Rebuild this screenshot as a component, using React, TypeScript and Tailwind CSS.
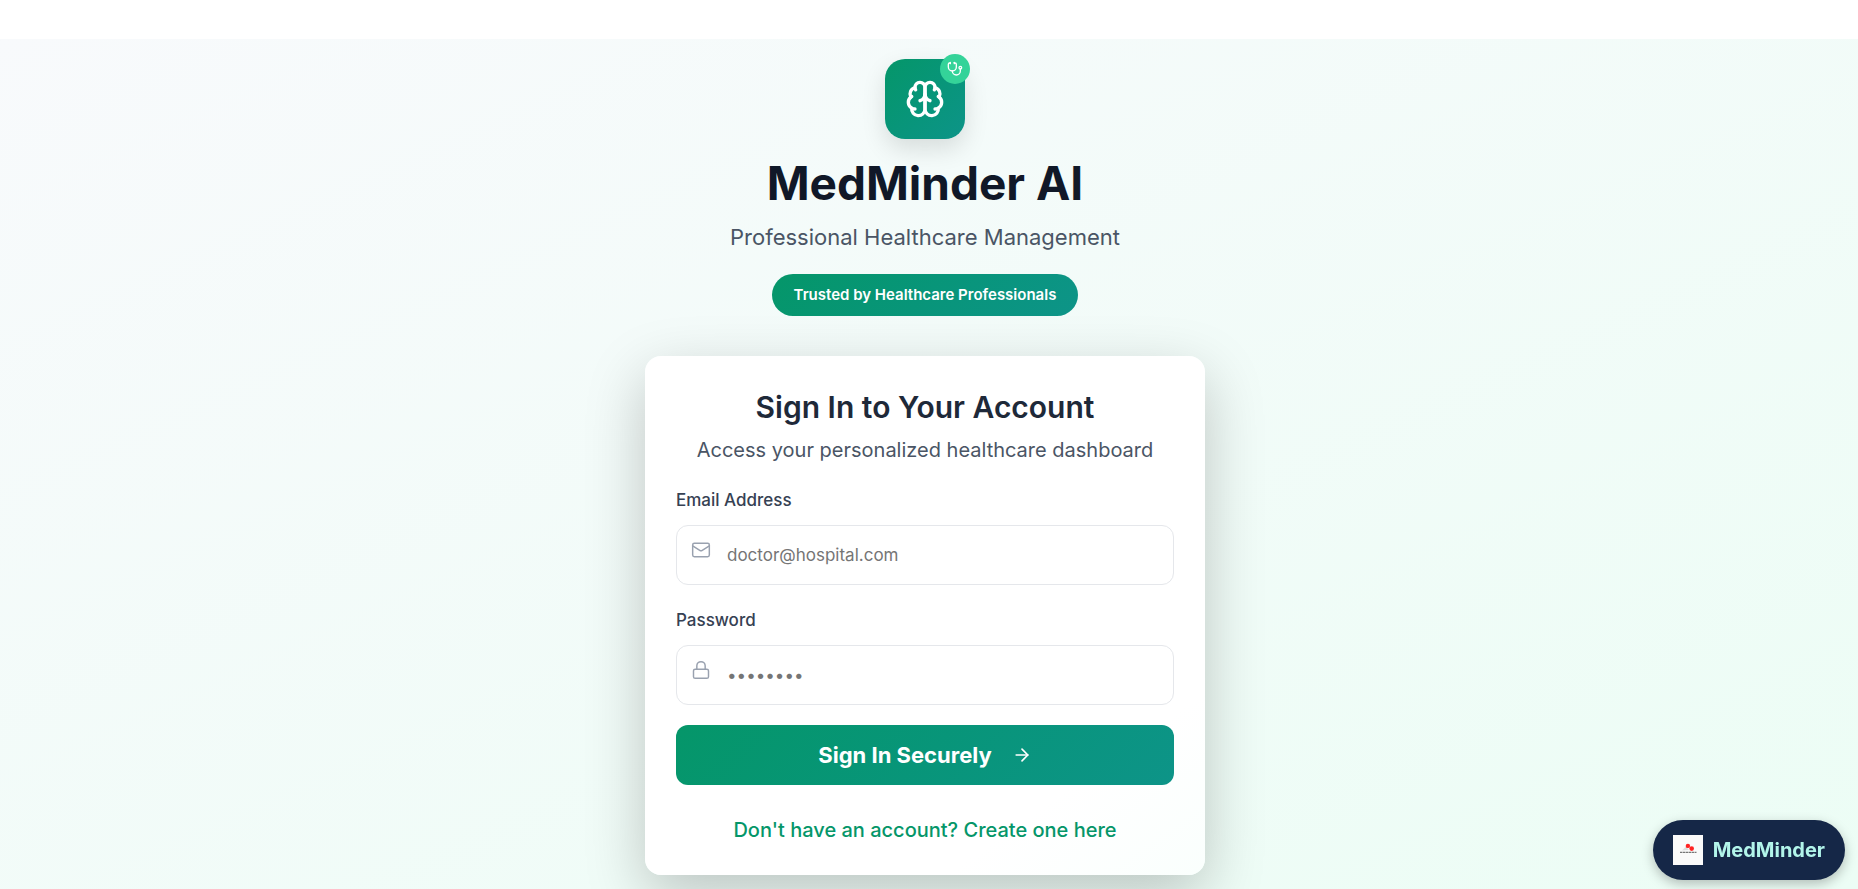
import { ArrowRight, Lock, Mail, Stethoscope } from "lucide-react";

function BrainIcon() {
  return (
    <svg
      className="size-10"
      viewBox="0 0 24 24"
      fill="none"
      stroke="currentColor"
      strokeWidth="2"
      strokeLinecap="round"
      strokeLinejoin="round"
      aria-hidden="true"
    >
      <path d="M12 5a3 3 0 1 0-5.997.125 4 4 0 0 0-2.526 5.77 4 4 0 0 0 .556 6.588A4 4 0 1 0 12 18Z" />
      <path d="M12 5a3 3 0 1 1 5.997.125 4 4 0 0 1 2.526 5.77 4 4 0 0 1-.556 6.588A4 4 0 1 1 12 18Z" />
      <path d="M15 13a4.5 4.5 0 0 1-3-4 4.5 4.5 0 0 1-3 4" />
      <path d="M17.599 6.5a3 3 0 0 0 .399-1.375" />
      <path d="M6.003 5.125A3 3 0 0 0 6.401 6.5" />
      <path d="M3.477 10.896a4 4 0 0 1 .585-.396" />
      <path d="M19.938 10.5a4 4 0 0 1 .585.396" />
      <path d="M6 18a4 4 0 0 1-1.967-.516" />
      <path d="M19.967 17.484A4 4 0 0 1 18 18" />
    </svg>
  );
}

function PillsLogo() {
  return (
    <svg className="size-[30px]" viewBox="0 0 30 30" aria-hidden="true">
      <rect width="30" height="30" fill="#fafafa" />
      <path d="M9 15.5l4-4 3 3.5z" fill="#dddddd" />
      <circle cx="14.9" cy="10.9" r="2.2" fill="#ff2222" />
      <circle cx="18.7" cy="13.6" r="2.3" fill="#ff2222" />
      <path d="M7 17.4h16.5" stroke="#777777" strokeWidth="1.4" strokeDasharray="2.5 .5" />
    </svg>
  );
}

export default function App() {
  return (
    <div className="flex min-h-screen flex-col bg-white font-['Inter',sans-serif]">
      <header className="h-[39px] shrink-0" />
      <main className="flex grow flex-col items-center bg-linear-to-br from-[#f8fafc] to-[#ecfdf5] pt-5 pr-2 pb-3">
        <div className="relative flex size-20 items-center justify-center rounded-[20px] bg-linear-135 from-[#059669] to-[#0d9488] text-white shadow-[0_10px_25px_rgba(0,0,0,0.12)]">
          <BrainIcon />
          <span className="absolute -top-[5px] -right-[5px] flex size-[30px] items-center justify-center rounded-full bg-[#34d399]">
            <Stethoscope className="size-4" aria-hidden="true" />
          </span>
        </div>

        <h1 className="mt-4 text-[46px] leading-14 font-bold text-gray-900">MedMinder AI</h1>
        <p className="mt-[10px] text-[22px] leading-8 text-gray-600">Professional Healthcare Management</p>
        <p className="mt-[21px] rounded-full bg-linear-135 from-[#059669] to-[#0d9488] px-[22px] py-[10px] text-[15px] leading-[22px] font-semibold text-white">
          Trusted by Healthcare Professionals
        </p>

        <section className="mt-10 w-full max-w-[560px] rounded-2xl bg-linear-[145deg,#ffffff_80%,#fafffd_100%] px-[31px] pt-[31px] pb-[30px] shadow-[0_20px_60px_rgba(0,0,0,0.22)]">
          <h2 className="text-center text-[30px] leading-10 font-semibold text-gray-800">Sign In to Your Account</h2>
          <p className="mt-2 text-center text-[20px] leading-[30px] text-gray-600">
            Access your personalized healthcare dashboard
          </p>

          <form className="mt-5 flex flex-col" onSubmit={(e) => e.preventDefault()}>
            <label htmlFor="email" className="text-[17px] leading-[30px] font-medium text-gray-700">
              Email Address
            </label>
            <div className="relative mt-[10px]">
              <Mail className="absolute top-[15px] left-[15px] size-5 text-gray-400" strokeWidth={1.75} aria-hidden="true" />
              <input
                id="email"
                type="email"
                placeholder="doctor@hospital.com"
                className="block h-[60px] w-full rounded-xl border border-gray-200 bg-white pr-4 pl-[50px] text-[17px] outline-none placeholder:text-[#757575]"
              />
            </div>

            <label htmlFor="password" className="mt-5 text-[17px] leading-[30px] font-medium text-gray-700">
              Password
            </label>
            <div className="relative mt-[10px]">
              <Lock className="absolute top-[15px] left-[15px] size-5 text-gray-400" strokeWidth={1.75} aria-hidden="true" />
              <input
                id="password"
                type="password"
                placeholder="••••••••"
                className="block h-[60px] w-full rounded-xl border border-gray-200 bg-white pr-4 pl-[50px] text-[17px] outline-none placeholder:text-[#757575]"
              />
            </div>

            <button
              type="submit"
              className="mt-5 flex h-[60px] items-center justify-center gap-5 rounded-xl bg-linear-135 from-[#059669] to-[#0d9488] text-[22px] font-bold text-white"
            >
              Sign In Securely
              <ArrowRight className="size-5" aria-hidden="true" />
            </button>
          </form>

          <p className="mt-[30px] text-center text-[20px] leading-[30px] font-medium">
            <a href="#register" className="text-[#059669]">
              Don't have an account? Create one here
            </a>
          </p>
        </section>
      </main>

      <a
        href="#medminder"
        className="fixed right-[13px] bottom-[9px] flex h-[60px] items-center gap-[10px] rounded-full bg-[#152747] px-5 text-[20px] font-bold text-[#b2f5ea] shadow-[0_4px_12px_rgba(0,0,0,0.25)]"
      >
        <PillsLogo />
        MedMinder
      </a>
    </div>
  );
}
